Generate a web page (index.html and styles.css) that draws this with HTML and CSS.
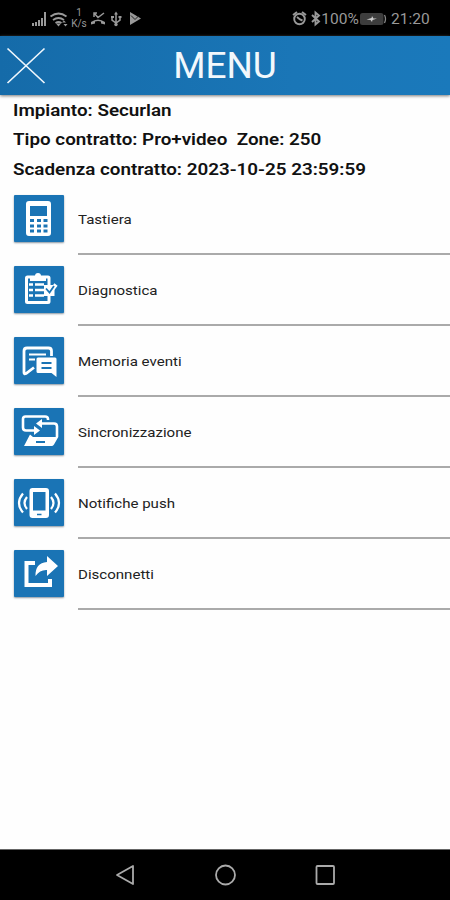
FILE: index.html
```html
<!DOCTYPE html>
<html lang="it">
<head>
<meta charset="utf-8">
<title>Menu</title>
<link rel="stylesheet" href="styles.css">
</head>
<body>
<div class="status">
  <svg class="status-left" viewBox="0 0 40 24" width="40" height="24">
    <g fill="#999"><path d="M2 17h2v3H2zM5 16h2v4H5zM8 14h2v6H8zM11 12h2v8h-2zM14 6h2v14h-2z"/></g>
    <g fill="none" stroke="#999" stroke-width="1.8"><path d="M20.500 10.500q8-6 16 0M23 14q5.500-4 11 0M25.500 17q3-2 6 0"/></g>
    <path d="M26 17.500h5l-2.500 3zM32 16.500l2-2 2 2zM33.500 18h4l-2 2.500z" fill="#999"/>
  </svg>
  <div class="rate"><span>1</span><span>K/s</span></div>
  <svg class="status-icons" viewBox="0 0 54 24" width="54" height="24">
    <path d="M2 18.500v-2.500q7-5 14 0v2.500l-4-1v-2q-3-1-6 0v2z" fill="#999"/>
    <path d="M5 11V7h3M5 7l4 4.500L15 7" fill="none" stroke="#999" stroke-width="1.500"/>
    <g fill="none" stroke="#999" stroke-width="1.500"><path d="M27 7v12M23 11v3l4 3 4-3v-3"/></g>
    <path d="M25 8.500l2-3 2 3zM22 10h3v2h-3zM29.500 10h3v2h-3z" fill="#999"/><circle cx="27" cy="18.500" r="1.700" fill="#999"/>
    <path d="M41 6l11 6.500L41 19z" fill="#999"/><path d="M42 9.500l4 4 4-4" fill="none" stroke="#222" stroke-width="1"/>
  </svg>
  <svg class="alarm" viewBox="0 0 30 24" width="30" height="24">
    <g fill="none" stroke="#999" stroke-width="1.900"><circle cx="7.500" cy="13" r="5.300"/><path d="M1 9l4-3M14 9l-4-3M5 11l3 2.500 2.500 1"/><path d="M20 9l7 6.500-3.500 3V6.500l3.500 3L20 16"/></g>
  </svg>
  <span class="percent">100%</span>
  <svg class="battery" viewBox="0 0 27 14" width="27" height="14">
    <rect x="0" y="1" width="23.500" height="12" rx="2.500" fill="#3d3d3d"/>
    <path d="M24.500 3q2 4 0 8" stroke="#888" stroke-width="1.300" fill="none"/>
    <path d="M6.500 7.500l5-1.500.5-2 1.500 2.500h3.500l-4.500 1.500-.5 2-1.500-2z" fill="#ccc"/>
  </svg>
  <span class="clock">21:20</span>
</div>
<header class="header">
  <svg class="close" viewBox="0 0 40 38" width="40" height="38"><path d="M1.500 1.500l37 34.500M38.500 1.500L1.500 36" stroke="#eef6fc" stroke-width="1.700" fill="none"/></svg>
  <h1 class="title">MENU</h1>
</header>
<main class="content">
  <section class="info">
    <p>Impianto: Securlan</p>
    <p>Tipo contratto: Pro+video&nbsp; Zone: 250</p>
    <p>Scadenza contratto: 2023-10-25 23:59:59</p>
  </section>
  <ul class="menu">
    <li class="item">
      <svg class="tile" viewBox="0 0 50 47"><path fill="#fff" fill-rule="evenodd" d="M15 6h19q3 0 3 3v29q0 3-3 3H15q-3 0-3-3V9q0-3 3-3zM16 11v10h17V11z"/><path fill="#1a74b5" d="M16 24h4v3h-4zM23 24h4v3h-4zM29.500 24h4v3h-4zM16 29.500h4v3h-4zM23 29.500h4v3h-4zM29.500 29.500h4v3h-4zM16 34.500h4v3h-4zM23 34.500h4v3h-4zM29.500 34.500h4v3h-4z"/></svg>
      <div class="label"><span>Tastiera</span></div>
    </li>
    <li class="item">
      <svg class="tile" viewBox="0 0 50 47"><rect x="12.500" y="11" width="22.500" height="25.500" rx="1" fill="none" stroke="#fff" stroke-width="3"/><path fill="#fff" d="M16 10h5q0-3 3-3t3 3h5v5H16z"/><g stroke="#fff" stroke-width="2.400"><path d="M15 18.500h4M21 18.500h9M15 24h4M21 24h9M15 29.500h4M21 29.500h9"/></g><path fill="#fff" d="M30 19h10.500v11H30z"/><path d="M32 22.500l4 4 6-8" fill="none" stroke="#fff" stroke-width="4"/><path d="M32 22.500l3.500 4 4.500-6.500" fill="none" stroke="#1a74b5" stroke-width="1.800"/></svg>
      <div class="label"><span>Diagnostica</span></div>
    </li>
    <li class="item">
      <svg class="tile" viewBox="0 0 50 47"><path d="M37.500 19v-5q0-3-3-3H13q-3 0-3 3v21.500q0 2 2 1L20 30.500" fill="none" stroke="#fff" stroke-width="2.800"/><path d="M15 17.500h17M15 22.500h6" stroke="#fff" stroke-width="2.200"/><path d="M24 20.500h17q1.500 0 1.500 1.500v18l-5-4H24q-1.500 0-1.500-1.500V22q0-1.500 1.500-1.500z" fill="#fff"/><path d="M27.500 26h10M27.500 31h10" stroke="#1a74b5" stroke-width="2"/></svg>
      <div class="label"><span>Memoria eventi</span></div>
    </li>
    <li class="item">
      <svg class="tile" viewBox="0 0 50 47"><path d="M34 12v-1q0-2.500-3-2.500H11.500Q9 8.500 9 11v8.500q0 3 3 3h9M26 15.500h14q3 0 3 3V29" fill="none" stroke="#fff" stroke-width="2.600"/><path fill="#fff" d="M22 15.500l6-4.500v9zM26 22.500L20 18v9zM16 26.500l3 2.500h25.300L40 36.500q-1 1.500-2.500 1.500H10z"/><path d="M22 34h9" stroke="#1a74b5" stroke-width="1.800"/></svg>
      <div class="label"><span>Sincronizzazione</span></div>
    </li>
    <li class="item">
      <svg class="tile" viewBox="0 0 50 47"><path fill="#fff" fill-rule="evenodd" d="M18.500 9h13.500q3 0 3 3v24q0 3-3 3H18.500q-3 0-3-3V12q0-3 3-3zM19 13v18.500h12.500V13z"/><path d="M23 35.500h4.500" stroke="#1a74b5" stroke-width="1.700"/><g fill="none" stroke="#fff" stroke-width="2.200"><path d="M13 18q-5 6 0 12M9 14.500q-8 9.500 0 19M37 18q5 6 0 12M41 14.500q8 9.500 0 19"/></g></svg>
      <div class="label"><span>Notifiche push</span></div>
    </li>
    <li class="item">
      <svg class="tile" viewBox="0 0 50 47"><path d="M21 13h-8.500v22H36v-6" fill="none" stroke="#fff" stroke-width="4"/><path fill="#fff" d="M33 6l11 10-11 10v-6q-7-.5-11.500 6Q21 13 33 12z"/></svg>
      <div class="label"><span>Disconnetti</span></div>
    </li>
  </ul>
</main>
<nav class="nav">
  <svg viewBox="0 0 22 22" width="22" height="22"><path d="M19 2v18L3 11z"/></svg>
  <svg viewBox="0 0 22 22" width="22" height="22"><circle cx="11.500" cy="11" r="9.500"/></svg>
  <svg viewBox="0 0 22 22" width="22" height="22"><rect x="2.500" y="2" width="17.500" height="18" rx="1"/></svg>
</nav>
</body>
</html>
```
FILE: styles.css
```css
* { box-sizing: border-box; }
body { margin: 0; width: 450px; height: 900px; display: flex; flex-direction: column; background: #fefefe; font-family: Roboto, sans-serif; color: #111; overflow: hidden; }
p, h1, ul { margin: 0; padding: 0; }
svg { display: block; flex: none; }
.status { height: 36px; flex: none; background: #000; color: #999; display: flex; align-items: center; padding-left: 30px; }
.rate { width: 18px; display: flex; flex-direction: column; align-items: center; font-size: 10px; line-height: 11px; margin-top: -1px; }
.status-icons { margin-left: 1px; }
.alarm { margin-left: 149px; }
.percent { width: 36px; font-size: 15.5px; display: flex; justify-content: center; margin: 2px 1px 0 0; }
.battery { margin: 2px 4px 0 1px; }
.clock { font-size: 15.5px; margin-top: 2px; }
.header { height: 59px; flex: none; background: linear-gradient(90deg, #156ba9, #1a76b7 65%, #1a79bb); display: grid; grid-template-columns: 52px 1fr 52px; align-items: center; box-shadow: 0 1px 3px #777; }
.close { margin-left: 6px; }
.title { justify-self: center; font-weight: 400; font-size: 37px; line-height: 58px; color: #f2f8fc; }
.content { flex: 1; }
.info { padding: 1px 0 0 13px; height: 89px; font-weight: 600; font-size: 17px; line-height: 29.3px; white-space: nowrap; }
.info p { width: max-content; transform: scaleX(1.107); transform-origin: left; }
.menu { list-style: none; }
.item { height: 71px; display: flex; }
.tile { width: 50px; height: 47px; margin: 11px 14px 0; background: #1a74b5; border-radius: 1px; box-shadow: 0 1px 2px #8a96a0; }
.label { flex: 1; border-bottom: 2px solid #aaa; padding-top: 25px; font-size: 13.5px; line-height: 20px; color: #222; white-space: nowrap; }
.label span { display: inline-block; transform: scaleX(1.115); transform-origin: left; }
.nav { height: 51px; flex: none; background: #000; border-top: 1px solid #666; display: flex; justify-content: center; align-items: center; gap: 78px; }
.nav svg { fill: none; stroke: #aaa; stroke-width: 1.8; stroke-linejoin: round; }
```
